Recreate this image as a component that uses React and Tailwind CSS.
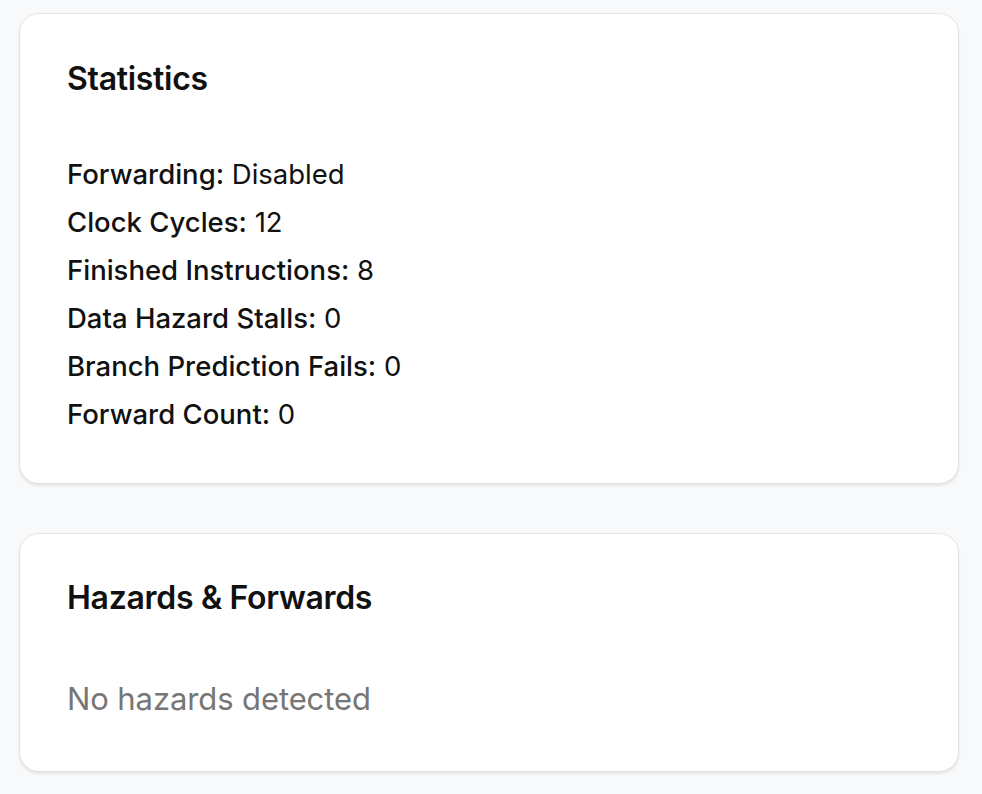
import React from "react";

const stats = [
  ["Forwarding:", "Disabled"],
  ["Clock Cycles:", "12"],
  ["Finished Instructions:", "8"],
  ["Data Hazard Stalls:", "0"],
  ["Branch Prediction Fails:", "0"],
  ["Forward Count:", "0"],
];

export default function App() {
  return (
    <div
      className="min-h-[794px] w-full bg-[#f8f9fa] pl-[19px] pr-[23px] pt-[13px] pb-[22px] text-[#111]"
      style={{ fontFamily: "Inter, 'Noto Sans', sans-serif" }}
    >
      <div className="flex flex-col gap-[49px]">
        <section className="rounded-[20px] border border-[#e3e3e3] bg-white px-[47px] pt-[46px] pb-[45px] shadow-[0_2px_3px_rgba(0,0,0,0.08)]">
          <h2 className="text-[32px] font-semibold leading-[38px] tracking-[-0.3px]">Statistics</h2>
          <div className="mt-[52px] flex flex-col">
            {stats.map(([k, v]) => (
              <div key={k} className="text-[27.5px] leading-[48px]">
                <span className="font-medium">{k}</span> {v}
              </div>
            ))}
          </div>
        </section>
        <section className="rounded-[20px] border border-[#e3e3e3] bg-white px-[47px] pt-[45px] pb-[48px] shadow-[0_2px_3px_rgba(0,0,0,0.08)]">
          <h2 className="text-[32px] font-semibold leading-[38px] tracking-[-0.3px]">Hazards &amp; Forwards</h2>
          <div className="mt-[58px] text-[31px] leading-[48px] tracking-[-0.1px] text-[#767676]">No hazards detected</div>
        </section>
      </div>
    </div>
  );
}
